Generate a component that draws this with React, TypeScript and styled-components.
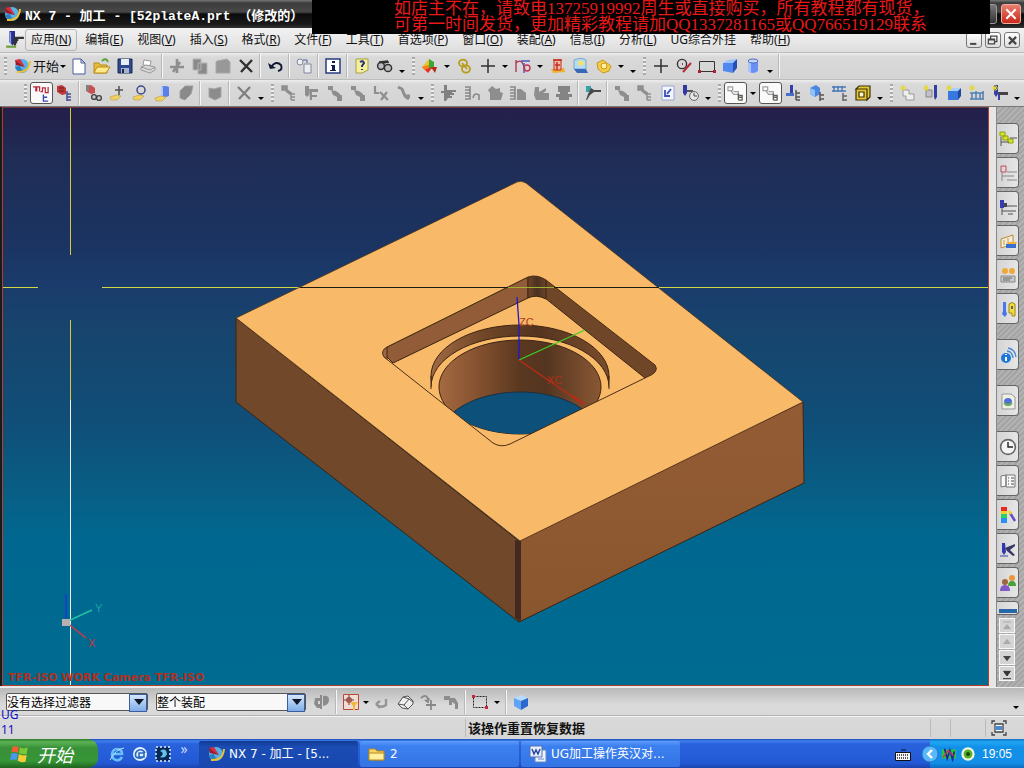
import React from "react";
import styled, { createGlobalStyle, css } from "styled-components";

const SANS = '"Noto Sans", "Noto Sans CJK SC", sans-serif';
const CJK = '"Noto Sans CJK SC", sans-serif';

const GlobalStyle = createGlobalStyle`
  * { box-sizing: border-box; }
  body { margin: 0; font-family: ${SANS}; font-size: 12px; color: #111; background: #d6d6d6; }
  button { font: inherit; color: inherit; padding: 0; border: 0; background: none; }
`;

const Window = styled.div`
  position: relative;
  display: flex;
  flex-direction: column;
  min-height: 100vh;
  overflow: hidden;
`;

/* ---------- title, banner, menus ---------- */

const TitleBar = styled.header`
  display: flex;
  align-items: center;
  height: 28px;
  padding: 0 3px;
  gap: 4px;
  background: linear-gradient(#777 0, #3c3c3c 3px, #484848 12px, #0c0c0c 14px, #1a1a1a 24px, #333 100%);
`;

const Title = styled.h1`
  flex: 1;
  margin: 0;
  color: #fff;
  font: bold 13px "Liberation Mono", ${CJK};
  white-space: pre;
`;

const WindowButton = styled.button<{ $close?: boolean }>`
  width: 20px;
  height: 20px;
  border: 1px solid ${(p) => (p.$close ? "#f0b0a0" : "#999")};
  border-radius: 3px;
  background: ${(p) => (p.$close ? "linear-gradient(#e88070, #c8281c)" : "linear-gradient(#777, #333)")};
  display: grid;
  place-items: center;
`;

const Banner = styled.aside`
  position: absolute;
  top: 0;
  left: 312px;
  right: 34px;
  height: 34px;
  padding: 1px 0 0 82px;
  overflow: hidden;
  background: #000;
  color: #e81818;
  font: 17px/16px "Liberation Serif", ${CJK};
  white-space: nowrap;
  p { margin: 0; }
`;

const MenuBar = styled.nav`
  display: flex;
  align-items: center;
  height: 24px;
  padding: 0 4px 0 5px;
  background: linear-gradient(#f2f2f2, #dedede);
`;

const Menus = styled.div`
  display: flex;
  gap: 2px;
`;

const MenuItem = styled.button<{ $active?: boolean }>`
  height: 22px;
  padding: 0 5px;
  border: 1px solid ${(p) => (p.$active ? "#b4b4b4" : "transparent")};
  border-radius: 3px;
  font: 12px/14px ${SANS};
  white-space: nowrap;
`;

const Spacer = styled.div`
  flex: 1;
`;

const MdiButtons = styled.div`
  display: flex;
  gap: 3px;
`;

const MdiButton = styled.button`
  width: 16px;
  height: 16px;
  border: 1px solid #777;
  border-radius: 3px;
  background: linear-gradient(#fff, #ddd);
  display: grid;
  place-items: center;
`;

/* ---------- toolbars ---------- */

const Toolbar = styled.div<{ $inset?: boolean }>`
  display: flex;
  align-items: center;
  height: 27px;
  padding-left: ${(p) => (p.$inset ? "20px" : "0")};
  border-top: 1px solid #bdbdbd;
  background: linear-gradient(#ececec 0, #d9d9d9 4px, #d4d4d4 100%);
`;

const Grip = styled.span`
  flex: none;
  width: 3px;
  height: 18px;
  margin: 0 3px 0 4px;
  background: repeating-linear-gradient(#aaa 0 2px, #eee 2px 4px);
`;

const Separator = styled.span`
  flex: none;
  width: 2px;
  height: 24px;
  margin: 0 2px;
  border-left: 1px solid #b8b8b8;
  border-right: 1px solid #f6f6f6;
`;

const Tool = styled.button<{ $active?: boolean }>`
  flex: none;
  width: 23px;
  height: 22px;
  display: grid;
  place-items: center;
  ${(p) =>
    p.$active &&
    css`
      border: 1px solid #555;
      border-radius: 3px;
      background: #fafafa;
    `}
`;

const StartTool = styled.button`
  font: 13px/18px ${CJK};
  white-space: nowrap;
`;

const DropButton = styled.button<{ $low?: boolean; $tight?: boolean }>`
  flex: none;
  width: ${(p) => (p.$tight ? "8px" : "12px")};
  height: 22px;
  display: grid;
  place-items: ${(p) => (p.$low ? "end center" : "center")};
  padding-bottom: ${(p) => (p.$low ? "4px" : "0")};
  &::after {
    content: "";
    border: 3px solid transparent;
    border-top-color: #000;
    border-bottom: 0;
  }
`;

/* ---------- work area ---------- */

const Work = styled.main`
  flex: 1;
  display: flex;
  min-height: 0;
  border-top: 1px solid #777;
  background: #e8e6e4;
`;

const Viewport = styled.section`
  flex: 1;
  min-width: 0;
  display: flex;
  margin: 0 0 1px 2px;
  border: 1px solid #b0402c;
  border-top-color: #6c3838;
  box-shadow: -2px 0 #1a1a1a;
  background: linear-gradient(
    #241f4a 0,
    #1f2d56 9%,
    #1b3462 24%,
    #1a3c6c 31%,
    #17446d 38%,
    #104e78 54%,
    #085f86 67%,
    #006890 75%,
    #006b91 100%
  );
  svg { flex: 1 1 0; width: 0; min-width: 0; display: block; }
`;

const Resource = styled.aside`
  flex: none;
  width: 28px;
  margin-left: 7px;
  padding-top: 16px;
  display: flex;
  flex-direction: column;
  align-items: flex-start;
  gap: 3px;
  border-left: 1px solid #888;
  background: repeating-linear-gradient(135deg, #a4a4a4 0 2px, #b2b2b2 2px 4px);
`;

const Tab = styled.button<{ $gap?: boolean; $cut?: boolean }>`
  width: 22px;
  height: ${(p) => (p.$cut ? "14px" : "31px")};
  margin-top: ${(p) => (p.$gap ? "12px" : "0")};
  border: 1px solid #666;
  border-left: 0;
  border-radius: 0 4px 4px 0;
  background: linear-gradient(90deg, #d4d4d4, #e6e6e6);
  display: grid;
  place-items: center;
  overflow: hidden;
`;

const Scrollers = styled.div`
  display: grid;
  gap: 1px;
  padding-left: 2px;
`;

const Scroller = styled.button`
  width: 16px;
  height: 15px;
  border: 1px solid #f8f8f8;
  background: #d4d4d4;
  display: grid;
  place-items: center;
`;

/* ---------- bottom bars ---------- */

const Footer = styled.footer`
  position: relative;
  background: linear-gradient(#b8b8b8, #dadada 18px, #d6d6d6);
`;

const SelectionBar = styled.div`
  display: flex;
  align-items: center;
  height: 29px;
  padding: 0 2px 0 6px;
  border-top: 1px solid #eee;
`;

const Picker = styled.label<{ $wide?: boolean }>`
  position: relative;
  display: flex;
  width: ${(p) => (p.$wide ? "150px" : "142px")};
  height: 18px;
  margin-right: ${(p) => (p.$wide ? "4px" : "8px")};
  &::before {
    content: "";
    position: absolute;
    right: 1px;
    top: 1px;
    width: 16px;
    height: 16px;
    border: 1px solid #3a5f9c;
    background: linear-gradient(#d4e6fb, #7fadea);
    pointer-events: none;
  }
  &::after {
    content: "";
    position: absolute;
    right: 4px;
    top: 6px;
    border: 5px solid transparent;
    border-top: 6px solid #101828;
    border-bottom: 0;
    pointer-events: none;
  }
  select {
    appearance: none;
    width: 100%;
    padding: 0;
    border: 1px solid #555;
    border-radius: 2px;
    background: #f8f8f8;
    color: #000;
    font: 12px/16px ${CJK};
  }
`;

const StatusBar = styled.div`
  display: grid;
  grid-template-columns: 466px 1fr 20px 35px 38px;
  height: 23px;
  border-top: 1px solid #f4f4f4;
  box-shadow: 0 -1px #b4b4b4;
`;

const Cell = styled.div`
  margin: 2px 0;
  padding-left: 2px;
  border-right: 1px solid #bbb;
  font: bold 13px/18px ${CJK};
  display: flex;
  align-items: center;
  &:last-child { border-right: 0; padding-left: 4px; }
`;

const Note = styled.div`
  position: absolute;
  left: 1px;
  top: 20px;
  color: #1010c8;
  font: 12px/15px ${SANS};
`;

const Taskbar = styled.nav`
  display: flex;
  align-items: stretch;
  height: 29px;
  background: linear-gradient(#1c4cb8 0, #3f80ee 2px, #2a62dc 5px, #2258d4 24px, #1a44ac 100%);
  color: #fff;
`;

const StartButton = styled.button`
  display: flex;
  align-items: center;
  gap: 7px;
  width: 98px;
  padding-left: 10px;
  border-radius: 0 10px 10px 0;
  background: linear-gradient(#2c7a2c 0, #5cb454 3px, #389038 9px, #369636 22px, #1e641e 100%);
  font: italic 18px/26px ${CJK};
`;

const QuickLaunch = styled.div`
  display: flex;
  align-items: center;
  width: 101px;
  padding-left: 7px;
`;

const More = styled.button`
  width: 20px;
  height: 20px;
  color: #c8dcff;
  font-size: 14px;
  line-height: 14px;
  align-self: start;
`;

const Task = styled.button<{ $active?: boolean }>`
  display: flex;
  align-items: center;
  gap: 4px;
  width: 159px;
  height: 26px;
  margin: 2px 2px 0 0;
  padding-left: 8px;
  border-radius: 2px;
  background: ${(p) =>
    p.$active ? "linear-gradient(#123a94, #1a4cb4 6px, #1848b0)" : "linear-gradient(#5c9cfc, #3c80f0 5px, #3474e4)"};
  font: 12px/16px "DejaVu Sans", ${CJK};
  white-space: pre;
`;

const InputMethod = styled.button`
  width: 34px;
  margin-right: 10px;
  display: grid;
  place-items: center;
`;

const Tray = styled.div`
  display: flex;
  align-items: center;
  width: 94px;
  background: linear-gradient(#1470c8 0, #20a8f4 3px, #1290e8 8px, #128ee6 24px, #0e6cc0 100%);
  time { padding-left: 5px; font: 12px/16px "Liberation Sans", sans-serif; white-space: nowrap; }
  button { width: 19px; display: grid; place-items: center; }
  button:first-child { margin-left: -10px; }
`;

/* ---------- icons ---------- */

const G = "#8e8e8e";
const tree = (c: string, d = c) => (
  <g stroke={d} strokeWidth="1.5" fill="none">
    <path d="M11 8v8M11 10h4M11 13h4M11 16h4" />
    <path d="M2 2h5v4H2z" fill={c} />
    <path d="M6 6l5 4" strokeWidth="3" stroke={c} />
  </g>
);
const cube = (
  <g>
    <path d="M2 6l5-3 9-1-4 4z" fill="#9cc4ff" />
    <path d="M2 6l10 0v10l-10-2z" fill="#5088f0" />
    <path d="M12 6l4-4v9l-4 5z" fill="#2450b8" />
  </g>
);
const drill = (c: string) => (
  <g fill={c}>
    <path d="M3 1h4v9l-2 3-2-3z" />
    <path d="M7 8h9v2H9v6H7z" />
  </g>
);
const spark = <path d="M4 1v6M1 4h6M2 2l4 4M6 2L2 6" stroke="#e8d820" strokeWidth="1" />;

const ART: Record<string, React.ReactNode> = {
  nx: (
    <g>
      <circle cx="9" cy="9" r="7" fill="#58b0e4" />
      <path d="M2 10q3 7 10 5-4-2-5-6z" fill="#2880c0" />
      <path d="M2 3l5-1 5 8z" fill="#e02838" />
      <path d="M2 3l1 5 9 2z" fill="#a01828" />
      <path d="M4 15Q16 16 17 4" stroke="#f0c030" strokeWidth="2" fill="none" />
    </g>
  ),
  app: (
    <g>
      <path d="M4 1h5v10l-2 3-3-3z" fill="#28308c" />
      <path d="M5 2v10" stroke="#88a0f0" />
      <path d="M8 6h9v2h-5v2h-1v2h-1v2H8z" fill="#333" />
      <path d="M1 15h9" stroke="#70a040" strokeWidth="2" />
    </g>
  ),
  file: <path d="M3 2h8l4 4v11H3zM11 2v4h4" fill="#fff" stroke="#4858a0" />,
  open: (
    <g stroke="#b88c18">
      <path d="M1 6h5l1 2h7v8H1z" fill="#e8bc38" />
      <path d="M4 10h13l-4 6H1z" fill="#ffe888" />
      <path d="M9 4q4-4 6 1" stroke="#58a030" strokeWidth="2" fill="none" />
    </g>
  ),
  save: (
    <g>
      <path d="M2 2h14v14H2z" fill="#304890" stroke="#182850" />
      <path d="M5 2h8v6H5z" fill="#e8eef8" />
      <path d="M5 11h8v5H5z" fill="#a8b4cc" />
      <path d="M6 12h2v4H6z" fill="#182850" />
    </g>
  ),
  print: (
    <g stroke="#999" fill="#d8d8d8">
      <path d="M5 3l7 1-1 5-7-1z" fill="#fff" />
      <path d="M2 10l5-2 9 2v3l-5 3-9-3z" />
      <path d="M2 10l9 3 5-3" fill="none" />
    </g>
  ),
  cut: <path d="M9 2v14M2 10h14M5 15L12 5" stroke={G} strokeWidth="2.6" />,
  copy: <path d="M2 2h8v11H2zM7 6h9v11H7z" fill="#8a8a8a" stroke="#b4b4b4" />,
  paste: <path d="M3 4l10-2 3 3v11H2V5z" fill="#989898" stroke="#a8a8a8" />,
  del: <path d="M3 3l12 12M15 3L4 15" stroke="#303030" strokeWidth="2.4" />,
  delGray: <path d="M3 3l12 12M15 3L4 15" stroke="#808080" strokeWidth="2.4" />,
  undo: (
    <g fill="none" stroke="#101838" strokeWidth="2">
      <path d="M5 10q5-7 10-2 2 5-3 6" />
      <path d="M2 6l2 6 6-1z" fill="#101838" stroke="none" />
    </g>
  ),
  touch: (
    <g stroke="#8088a0" fill="#eee">
      <circle cx="5" cy="5" r="3" />
      <path d="M9 7h7v9H9z" />
      <path d="M8 3h4v3" fill="none" stroke="#4860a8" />
    </g>
  ),
  info: (
    <g>
      <path d="M2 2h14v14H2z" fill="#fff" stroke="#283c80" strokeWidth="1.5" />
      <path d="M8 4h3v2H8zM7 8h4v5h1v1H6v-1h2V9H7z" fill="#101c50" />
    </g>
  ),
  help: (
    <g>
      <path d="M3 2h12v11l-6 3H3z" fill="#f4f09c" stroke="#a8a040" />
      <path d="M7 5q3-2 4 1l-2 3v1M9 12v1" fill="none" stroke="#283080" strokeWidth="2" />
    </g>
  ),
  find: (
    <g fill="#bbb" stroke="#303030" strokeWidth="1.5">
      <path d="M3 5l9-1M7 6l6-1" />
      <circle cx="5" cy="9" r="3.4" />
      <circle cx="12" cy="11" r="3.6" />
    </g>
  ),
  wcs: (
    <g>
      <path d="M1 10L8 2v9z" fill="#f0c020" />
      <path d="M8 2l5 3v7H8z" fill="#38a838" />
      <path d="M1 10l6 6 4-5z" fill="#e83020" />
      <path d="M1 10l3 3 4-2V8z" fill="#f08020" />
      <path d="M10 10h6l-2 6z" fill="#b82818" />
    </g>
  ),
  link: (
    <g fill="none" stroke="#b89c18" strokeWidth="1.8">
      <ellipse cx="7" cy="6" rx="4" ry="3.4" />
      <ellipse cx="10" cy="12" rx="4" ry="3.6" />
      <path d="M6 6l5 6" />
    </g>
  ),
  plus: <path d="M9 2v14M2 9h14" stroke="#303030" strokeWidth="1.5" />,
  curve: (
    <g fill="none" strokeWidth="1.4">
      <path d="M2 3v12M2 6q6-6 9 7" stroke="#b03858" />
      <path d="M7 4l9 0M10 6v10" stroke="#4858c0" />
      <circle cx="13" cy="11" r="3" stroke="#c03850" />
    </g>
  ),
  cylRed: (
    <g>
      <path d="M2 12l13-1 1 4-12 1z" fill="#f0b030" />
      <path d="M5 3h7v10H5z" fill="#f8b8a8" stroke="#c03020" />
      <path d="M4 3h9M6 8h5M8 5v8" stroke="#c03020" strokeWidth="1.5" />
    </g>
  ),
  sheet: (
    <g>
      <path d="M2 3q8-3 12 0v9H2z" fill="#b0dcf8" stroke="#78a8c8" />
      <path d="M2 12h12l2 4H5z" fill="#3868b8" />
      <path d="M6 4q5-2 7 3-4 3-7 1z" fill="#f4e078" />
    </g>
  ),
  gold: (
    <g fill="#f4cc48" stroke="#c89820">
      <path d="M2 6l6-3 4 3 4 3-2 5-6 2-5-4z" />
      <circle cx="9" cy="9" r="3" fill="#fff0a0" />
    </g>
  ),
  arc: (
    <g fill="none">
      <circle cx="7" cy="7" r="4.6" stroke="#333" strokeWidth="1.4" />
      <path d="M7 7h1M8 15l8-9" stroke="#b82838" strokeWidth="2" />
    </g>
  ),
  rect: (
    <g>
      <path d="M1.5 4.5h15v10h-15z" fill="none" stroke="#333" />
      <path d="M0 13h3v3H0zM15 13h3v3h-3z" fill="#b02030" />
    </g>
  ),
  block: cube,
  cyl: (
    <g>
      <path d="M4 4v10q5 4 10 0V4z" fill="#6890f4" />
      <path d="M4 4v10l3 2V4z" fill="#a8c4ff" />
      <ellipse cx="9" cy="4" rx="5" ry="2" fill="#c4d8ff" stroke="#5068b8" />
    </g>
  ),
  program: (
    <g fill="none">
      <path d="M0 2h3v5M4 7V2h3v5M8 7h2V3h3v5h3V2" stroke="#b82838" strokeWidth="1.3" />
      <path d="M11 10v7h5M11 13h4" stroke="#3848b0" strokeWidth="1.4" />
    </g>
  ),
  method: (
    <g>
      <path d="M1 2l5-1 4 3v6l-4 1-5-3z" fill="#c03838" />
      <path d="M3 4h5M3 7h5" stroke="#602020" />
      <path d="M11 7v10M11 10h4M11 13h4M11 16h4" stroke="#444c90" strokeWidth="1.5" />
    </g>
  ),
  findOp: (
    <g>
      <path d="M1 2l5-1 4 3v5l-4 1-5-3z" fill="#c85050" />
      <path d="M1 1h3v6H1z" fill="#808080" />
      <circle cx="9" cy="13" r="2.4" fill="#ccc" stroke="#444" strokeWidth="1.4" />
      <circle cx="14" cy="14" r="2.4" fill="#ccc" stroke="#444" strokeWidth="1.4" />
    </g>
  ),
  handPlus: (
    <g>
      <path d="M11 2v9M7 6h8" stroke="#505050" strokeWidth="1.5" />
      <path d="M2 13l6-2 5 1-4 4H3z" fill="#f0d060" stroke="#b89c40" strokeWidth=".6" />
    </g>
  ),
  handArc: (
    <g>
      <circle cx="10" cy="6" r="4" fill="none" stroke="#3c4888" strokeWidth="1.5" />
      <path d="M2 13l6-2 5 1-4 4H3z" fill="#f0d060" stroke="#b89c40" strokeWidth=".6" />
    </g>
  ),
  handCyl: (
    <g>
      <path d="M7 3q4-2 8 0v9q-4 2-8 0z" fill="#5880e8" />
      <path d="M7 3v9h2V3z" fill="#b0c8ff" />
      <path d="M1 14l6-2 5 1-4 4H2z" fill="#f0d060" stroke="#b89c40" strokeWidth=".6" />
    </g>
  ),
  stack: <path d="M3 7l5-5h8l-2 8-6 6-5-2z" fill="#8a8a8a" stroke="#a0a0a0" />,
  shield: <path d="M3 4l5 1 7-2v10l-6 3-6-3z" fill="#8c8c8c" stroke="#a4a4a4" />,
  gTree: tree("#8e8e8e"),
  gMill: (
    <g fill={G}>
      <path d="M2 2h4v9l-2 2-2-2z" />
      <path d="M6 5h9v3H9v3h5v2H9v3H7z" />
    </g>
  ),
  gBlk: (
    <g fill={G}>
      <path d="M2 2h5v4H2z" />
      <path d="M5 6l5 1 4 3v1h2v6h-5v-4l-4-2z" />
    </g>
  ),
  gCut: (
    <g stroke={G} strokeWidth="2.2" fill="none">
      <path d="M3 2v7h4M8 8l8 8M15 8l-6 8" />
    </g>
  ),
  gLine: <path d="M3 3l4 2 3 7 4 3M9 12h6" stroke={G} strokeWidth="3" fill="none" />,
  gHand: <path d="M4 1h3v5h9v2h-4v1h2v2H10v1h2v2H8l-2 3H4V9H1V7h3z" fill="#808080" />,
  gCoil: <path d="M2 3h5v3H2M7 6v3H2M7 9v3H2M7 12v3H2M10 14q1-6 6-3v5" stroke="#888" strokeWidth="1.6" fill="none" />,
  gFold: <path d="M2 6l4-4 4 3 4-1v4l3 1-2 7H4V9z" fill={G} />,
  gSaw: (
    <g>
      <path d="M1 3h5v3H1M6 6v3H1M6 9v3H1M6 12v3H1" stroke="#888" strokeWidth="1.6" />
      <path d="M8 5h4l5 4v7H8z" fill={G} />
    </g>
  ),
  gPost: <path d="M3 3h4v5l7-4v3l-3 2h6v7H4l-2-5z" fill={G} />,
  gMach: <path d="M3 2h12v6h-2v2h4v3h-3v3H4v-3H1v-3h4V8H3z" fill="#848484" />,
  tool: (
    <g>
      <path d="M2 2h5v6H2z" fill="#38a0a8" />
      <path d="M7 4l3 2h7v2h-7l-4 3-3 5H2l2-6z" fill="#484848" />
    </g>
  ),
  docBlue: (
    <g>
      <path d="M3 2h12v14H3z" fill="#f4f6ff" stroke="#98a4d0" />
      <path d="M6 6v6h5M8 10l4-5" fill="none" stroke="#3850b8" strokeWidth="1.8" />
    </g>
  ),
  clockTool: (
    <g>
      <path d="M1 1h4v8l-2 3-2-3z" fill="#3038a8" />
      <path d="M5 6h6v2H5z" fill="#555" />
      <circle cx="12" cy="12" r="4.4" fill="#e8e8e8" stroke="#666" />
      <path d="M12 9v3h3" stroke="#444" fill="none" />
    </g>
  ),
  order: (
    <g fill="none" stroke="#a0a0a0" strokeWidth="1.3">
      <path d="M1 2h5v4H1zM4 6l3 4h5V7H7" />
      <path d="M12 9v7M12 11h4v5h-4M12 13h4" stroke="#5c6458" strokeWidth="1.4" />
    </g>
  ),
  blueTool: (
    <g>
      <path d="M5 1h3v8l-2 2-1-2z" fill="#3040b0" />
      <path d="M1 9h8v3H1z" fill="#4870c8" />
      <path d="M11 6v10M11 9h4M11 13h4M11 16h4" stroke="#555" strokeWidth="1.5" />
    </g>
  ),
  blueBox: (
    <g>
      <path d="M2 4l6-3 4 3v6l-5 3-5-3z" fill="#4888e0" />
      <path d="M2 4l5 2v7l-5-3z" fill="#90c0f8" />
      <path d="M12 8v9M12 11h4M12 15h4" stroke="#555" strokeWidth="1.5" />
    </g>
  ),
  blueRail: (
    <g>
      <path d="M1 3h14M1 7h14M3 2v6M7 2v6M11 2v6" stroke="#4878b8" strokeWidth="1.4" />
      <path d="M12 9v8M12 12h4M12 16h4" stroke="#666" strokeWidth="1.5" />
    </g>
  ),
  yellowBox: (
    <g stroke="#383010" strokeWidth="1.2">
      <path d="M2 5h11v11H2zM2 5l3-3h11v11l-3 3V5z" fill="#e8c830" />
      <path d="M5 8h5v5H5z" fill="#fff8c0" />
    </g>
  ),
  newOp: (
    <g>
      <path d="M4 6h6v4h5v6H7v-4H4z" fill="#eee" stroke="#999" />
      {spark}
    </g>
  ),
  newTool: (
    <g>
      <path d="M4 6h6v7H4z" fill="#c0c0c8" stroke="#888" />
      <path d="M12 1h3v12l-2 3-1-3z" fill="#3040a0" />
      {spark}
    </g>
  ),
  newBox: (
    <g>
      <path d="M3 7l4-3h9l-3 3z" fill="#a8d0ff" />
      <path d="M3 7h10v9H3z" fill="#3878e0" />
      <path d="M13 7l3-3v8l-3 4z" fill="#1c48a0" />
      {spark}
    </g>
  ),
  newRail: (
    <g>
      <path d="M2 9h14M2 15h14M4 9v6M8 7v8M12 9v6M15 7v8" stroke="#5080b0" strokeWidth="1.5" />
      {spark}
    </g>
  ),
  newPliers: (
    <g>
      {drill("#3840a0")}
      <path d="M8 8h9v3H8z" fill="#444" />
      {spark}
    </g>
  ),
  /* resource tabs */
  navAsm: (
    <g>
      <path d="M1 2h5v4H1zM4 6h5v4H4zM9 9h5v4H9z" fill="#d8e428" stroke="#90a010" />
      <path d="M2 7v9M2 12h8M11 8h7" stroke="#555" />
    </g>
  ),
  navPart: (
    <g fill="none" stroke="#888">
      <path d="M2 2h5v6H2z" stroke="#c04858" />
      <path d="M3 8v9M3 12h12M8 8h10M8 16h10" />
    </g>
  ),
  navOp: (
    <g>
      <path d="M1 2h4v8H1z" fill="#383cb0" />
      <path d="M5 5h3v4H5z" fill="#445" />
      <path d="M8 8h10M3 10v7M3 13h14M9 16h5" stroke="#555" />
    </g>
  ),
  navTmpl: (
    <g>
      <path d="M2 7l12-4v9L2 16z" fill="#f0ece0" stroke="#c08830" />
      <path d="M5 8v5M9 6v5" stroke="#d89838" />
      <path d="M7 12h10v4H7z" fill="#3870d0" />
      <path d="M7 12l3-2h8l-1 2z" fill="#f0b030" />
    </g>
  ),
  navPeople: (
    <g>
      <circle cx="6" cy="5" r="3" fill="#f0a838" />
      <circle cx="13" cy="5" r="3" fill="#f0a838" />
      <path d="M2 10h14v6H2z" fill="#c8c8c8" stroke="#888" />
      <path d="M4 12h9M4 14h7" stroke="#666" />
    </g>
  ),
  navTherm: (
    <g>
      <path d="M4 2h3v9l1 3-2 3-3-3 1-3z" fill="#4878e8" />
      <path d="M10 4q3-3 6 0v12h-3v-3h-3z" fill="#f0dc40" stroke="#a08818" />
      <path d="M12 6h2v3h-2z" fill="#666" />
    </g>
  ),
  navInfo: (
    <g>
      <circle cx="7" cy="12" r="5" fill="#1c78d8" />
      <path d="M6 8h2v1H6zM6 11h2v4H6z" fill="#fff" />
      <path d="M8 5q5 0 6 7M9 2q7 1 8 9" stroke="#4888d8" fill="none" strokeWidth="1.3" />
    </g>
  ),
  navWeb: (
    <g>
      <path d="M3 2h9l4 3v12H3z" fill="#eef0e4" stroke="#999" />
      <circle cx="9" cy="10" r="4" fill="#5070d8" />
      <path d="M5 11q4 4 8 0" stroke="#70b050" strokeWidth="2" fill="none" />
    </g>
  ),
  clock: (
    <g>
      <circle cx="9" cy="9" r="7.4" fill="#f4f4f4" stroke="#666" strokeWidth="1.6" />
      <path d="M9 4v5h5" stroke="#222" fill="none" strokeWidth="1.4" />
    </g>
  ),
  navDoc: (
    <g fill="#f8f8f8" stroke="#777">
      <path d="M2 4l5-1v11l-5 1zM7 3h9v12H7z" />
      <path d="M9 6h1M12 6h3M9 9h1M12 9h3M9 12h1M12 12h3" stroke="#444" />
    </g>
  ),
  navColor: (
    <g>
      <path d="M2 1h6v4H2z" fill="#e82820" />
      <path d="M2 5h6v3H2z" fill="#f0d020" />
      <path d="M2 8h6v4H2z" fill="#30d060" />
      <path d="M2 12h6v5H2z" fill="#2890f0" />
      <path d="M11 7l5 8" stroke="#6848c8" strokeWidth="2.5" />
      <path d="M10 5l2 3" stroke="#f0d020" strokeWidth="2.5" />
    </g>
  ),
  navMill: (
    <g>
      <path d="M3 3l3 0 1 9-2 3-2-3z" fill="#3038b0" />
      <path d="M6 8l10-4v2l-5 4 5 5-2 1-6-5z" fill="#383868" />
      <path d="M1 16h8" stroke="#8890c0" strokeWidth="2" />
    </g>
  ),
  navRoles: (
    <g>
      <circle cx="13" cy="4" r="3" fill="#e89838" />
      <path d="M9 12q0-5 4-5t4 5z" fill="#48a038" />
      <circle cx="6" cy="8" r="3" fill="#a06838" />
      <path d="M1 17q0-6 5-6t5 6z" fill="#8058c8" />
    </g>
  ),
  navLast: <path d="M0 7h18v4H0z" fill="#2868a8" />,
  /* selection bar */
  gChain: (
    <g>
      <path d="M2 5h6v3H5v3h3v4H4l-3-4zM10 3q6-1 6 4t-6 6z" fill="#8c8c8c" />
      <path d="M8 2v14" stroke="#8c8c8c" strokeWidth="2" />
    </g>
  ),
  snap: (
    <g>
      <path d="M1.5 1.5h15v15h-15z" fill="#f0dcd4" stroke="#b84838" />
      <path d="M7 2v10M2 7h10" stroke="#803028" />
      <path d="M5 5h4v4H5z" fill="none" stroke="#803028" />
      <path d="M8 9h8l-3 4v4h-2v-4z" fill="#f0b838" />
    </g>
  ),
  gBack: <path d="M3 11q5 5 10 1V6M3 11l4-3M3 11l4 4" fill="none" stroke="#959595" strokeWidth="2.4" />,
  eraser: <path d="M2 11l5-7 5-1 5 5v3l-5 5-6-1zM2 11l6 1 4 4M8 12l5-6 4 3M7 4l6 2" fill="#eee" stroke="#555" />,
  gUndo: <path d="M2 5q6-5 7 2M10 5l-1 4-3-2M12 7v10M7 12h10" fill="none" stroke="#888" strokeWidth="1.8" />,
  gSteps: <path d="M2 3h6v2h5l3 5v6h-3v-5l-3-2v3H7V7H2z" fill="#8c8c8c" />,
  marquee: (
    <g>
      <path d="M2.5 3.5h13v11h-13z" fill="none" stroke="#222" strokeDasharray="2 1" />
      <path d="M1 2h3v3H1zM14 13h3v3h-3z" fill="#c82838" />
    </g>
  ),
  blueCube: (
    <g>
      <path d="M2 5l7-3 7 3-7 3z" fill="#b8dcff" />
      <path d="M2 5l7 3v9l-7-4z" fill="#60a4f4" />
      <path d="M9 8l7-3v8l-7 4z" fill="#2c68d0" />
    </g>
  ),
  full: (
    <g fill="none" stroke="#444" strokeWidth="1.3">
      <path d="M2 5V2h3M13 2h3v3M16 13v3h-3M5 16H2v-3" />
      <path d="M5 5h8v8H5z" fill="#fff" />
      <path d="M6 7h6v4H6z" fill="#4888d8" stroke="none" />
    </g>
  ),
  /* taskbar */
  flag: (
    <g>
      <path d="M2 3q3-2 6 0L7 8Q4 6 1 8z" fill="#f06030" />
      <path d="M9 3q3 2 7 0l-1 6q-3 1-7-1z" fill="#78c838" />
      <path d="M1 9q3-2 6 0l-1 6q-3-2-6 0z" fill="#4898f0" />
      <path d="M8 9q3 2 7 1l-1 6q-4 1-7-1z" fill="#f8cc38" />
    </g>
  ),
  ie: (
    <g fill="none">
      <path d="M14 12q-2 4-6 3-4-1-4-6 1-5 5-5 5 0 5 5H4" stroke="#68c0f8" strokeWidth="2.6" />
      <path d="M2 15Q8 4 16 3" stroke="#b0e0ff" />
    </g>
  ),
  mail: (
    <g>
      <circle cx="9" cy="9" r="7" fill="#e4f0fc" />
      <path d="M14 8q-2-4-6-3-5 2-3 7 5 3 8-1M8 8h5v4H8z" fill="none" stroke="#2868c0" strokeWidth="1.6" />
    </g>
  ),
  desk: (
    <g>
      <path d="M2 2h14v14H2z" fill="#082858" stroke="#e0f0ff" strokeWidth="1.5" strokeDasharray="2 2" />
      <path d="M6 6q6-4 7 3-2 5-7 3 4-2 2-5z" fill="#68c0e8" />
    </g>
  ),
  folder: (
    <g stroke="#b88818">
      <path d="M1 4h6l2 2h7v9H1z" fill="#f8d860" />
      <path d="M1 8h15v7H1z" fill="#fff0a0" />
    </g>
  ),
  word: (
    <g>
      <path d="M6 5h11v12H6z" fill="#f0f4ff" stroke="#6888c0" />
      <path d="M1 1h12v11H1z" fill="#e8eefc" stroke="#5070b0" />
      <path d="M3 4l2 5 2-4 2 4 2-5" fill="none" stroke="#2848a0" strokeWidth="1.5" />
      <path d="M9 14h6" stroke="#6888c0" />
    </g>
  ),
  keyboard: (
    <g>
      <path d="M1.5 7.5h15v8h-15z" fill="#f4f4f4" stroke="#111" />
      <path d="M3 10h12M3 13h12" stroke="#222" strokeDasharray="1 1" strokeWidth="1.5" />
      <path d="M7 5h5" stroke="#111" />
    </g>
  ),
  chevron: (
    <g>
      <circle cx="9" cy="9" r="8" fill="#58b8f8" stroke="#2878d0" />
      <path d="M11 5L7 9l4 4" fill="none" stroke="#fff" strokeWidth="2.4" />
    </g>
  ),
  net: (
    <g>
      <path d="M1 4h16v10H1z" fill="#28c838" />
      <path d="M4 3l3 11 3-9 3 10 2-9" fill="none" stroke="#2028a0" strokeWidth="2" />
      <path d="M2 13l6-8 6 6" stroke="#d03060" fill="none" strokeWidth="1.5" />
    </g>
  ),
  eye: (
    <g>
      <circle cx="9" cy="9" r="7.5" fill="#f0f8e0" />
      <circle cx="9" cy="9" r="5" fill="#58b028" />
      <circle cx="9" cy="9" r="2.2" fill="#184810" />
    </g>
  ),
  /* window glyphs */
  winMin: <path d="M4 14h8" stroke="#444" strokeWidth="2.5" />,
  winRestore: <path d="M6 8V4h8v7h-3M3 8h8v6H3zM3 9h8" fill="none" stroke="#444" strokeWidth="1.6" />,
  winClose: <path d="M4 4l10 10M14 4L4 14" stroke="#444" strokeWidth="3" />,
  closeWhite: <path d="M3 3l12 12M15 3L3 15" stroke="#fff" strokeWidth="2.6" />,
  top: <path d="M3 3h12M9 7l5 6H4z" fill="#aaa" stroke="#aaa" strokeWidth="1.5" />,
  up: <path d="M9 4l6 8H3z" fill="#aaa" />,
  down: <path d="M9 14l6-8H3z" fill="#444" />,
  bottom: <path d="M3 16h12M9 12l5-7H4z" fill="#333" stroke="#333" strokeWidth="1.5" />,
};

const Icon = ({ name, size = 18 }: { name: string; size?: number }) => (
  <svg width={size} height={size} viewBox="0 0 18 18" fill="none" aria-hidden="true">
    {ART[name]}
  </svg>
);

/* "|" separator, ":" grip, "v" arrow, "_" low arrow, "*" prefix marks a pressed tool, "<" narrow arrow */
const Tools = ({ items }: { items: string }) => (
  <>
    {items.split(" ").map((it, i) => {
      if (it === "|") return <Separator key={i} />;
      if (it === ":") return <Grip key={i} />;
      if (it === "v") return <DropButton key={i} aria-label="更多" />;
      if (it === "<") return <DropButton key={i} $tight aria-label="更多" />;
      if (it === "_") return <DropButton key={i} $low aria-label="选项" />;
      const active = it[0] === "*";
      const name = active ? it.slice(1) : it;
      return (
        <Tool key={i} $active={active} aria-label={name}>
          <Icon name={name} size={active ? 17 : 18} />
        </Tool>
      );
    })}
  </>
);

const MENUS: [string, string][] = [
  ["应用", "N"], ["编辑", "E"], ["视图", "V"], ["插入", "S"], ["格式", "R"], ["文件", "F"], ["工具", "T"],
  ["首选项", "P"], ["窗口", "O"], ["装配", "A"], ["信息", "I"], ["分析", "L"], ["UG综合外挂", ""], ["帮助", "H"],
];

const TABS: { name: string; gap?: boolean; cut?: boolean }[] = [
  { name: "navAsm" }, { name: "navPart" }, { name: "navOp" }, { name: "navTmpl" }, { name: "navPeople" },
  { name: "navTherm" }, { name: "navInfo", gap: true }, { name: "navWeb", gap: true }, { name: "clock", gap: true },
  { name: "navDoc" }, { name: "navColor" }, { name: "navMill" }, { name: "navRoles" }, { name: "navLast", cut: true },
];

const POCKET =
  "M387 347L528 277Q537 274 546 280L655 365Q660 372 647 377L510 444Q501 448 493 443L384 357Q380 351 387 347Z";

const Model = () => (
  <svg viewBox="3 108 985 577" preserveAspectRatio="xMidYMid slice" role="img" aria-label="52plateA">
    <defs>
      <linearGradient id="bore">
        <stop offset="0" stopColor="#a56a40" />
        <stop offset=".25" stopColor="#83502f" />
        <stop offset=".5" stopColor="#5a3820" />
        <stop offset=".66" stopColor="#543520" />
        <stop offset="1" stopColor="#8a5834" />
      </linearGradient>
      <linearGradient id="rim">
        <stop offset="0" stopColor="#a06a42" />
        <stop offset=".3" stopColor="#704628" />
        <stop offset=".6" stopColor="#543420" />
        <stop offset="1" stopColor="#7a4c2c" />
      </linearGradient>
      <linearGradient id="corner">
        <stop offset="0" stopColor="#704628" />
        <stop offset=".5" stopColor="#4c3020" />
        <stop offset="1" stopColor="#6a4428" />
      </linearGradient>
      <linearGradient id="rightFace" x1="0" x2="0" y1="0" y2="1">
        <stop offset="0" stopColor="#945c34" />
        <stop offset="1" stopColor="#8a562e" />
      </linearGradient>
      <clipPath id="pocket"><path d={POCKET} /></clipPath>
      <clipPath id="outer"><ellipse cx="520" cy="376" rx="89" ry="51" /><path d="M431 376h178v70H431z" /></clipPath>
      <clipPath id="inner"><ellipse cx="520" cy="387" rx="81" ry="47" /></clipPath>
    </defs>

    <path d="M70.500 108V255M70.500 320V400" stroke="#d8c840" />
    <path d="M70.500 400V686" stroke="#f0f0e0" />
    <path d="M3 287.500H38M102 287.500H988" stroke="#d4d840" />

    <g strokeLinejoin="round">
      <path d="M236 318L519 541V622L236 402Z" fill="#714829" stroke="#3c2412" />
      <path d="M519 541L803 402L804 483L519 622Z" fill="url(#rightFace)" stroke="#3c2412" />
      <path d="M515 540L521 541V621L515 618Z" fill="#432a20" />
      <path d="M236 318L517 182Q521 180 526 183L803 402L520 541Z" fill="#f8ba69" stroke="#4a3018" strokeWidth=".8" />
    </g>

    <g clipPath="url(#pocket)">
      <path d="M380 350L387 347L528 277V298L393 363Z" fill="#925c38" stroke="#3c2412" />
      <path d="M378 340H387V360L378 356Z" fill="#a06840" stroke="#3c2412" />
      <path d="M546 278L665 366L650 382L545 298Z" fill="#704628" stroke="#3c2412" />
      <path d="M528 270H546V299Q536 294 528 298Z" fill="url(#corner)" stroke="#3c2412" />
      <ellipse cx="520" cy="376" rx="89" ry="51" fill="url(#rim)" stroke="#3c2412" />
      <g clipPath="url(#outer)">
        <ellipse cx="520" cy="387" rx="89" ry="51" fill="#f8ba69" />
        <path d="M431 387a89 51 0 0 1 178 0" fill="none" stroke="#3c2412" />
      </g>
      <path d="M431 376v13M609 376v13" stroke="#3c2412" />
      <ellipse cx="520" cy="387" rx="81" ry="47" fill="url(#bore)" stroke="#3c2412" />
      <g clipPath="url(#inner)">
        <ellipse cx="520" cy="439" rx="81" ry="47" fill="#0d5079" stroke="#203040" />
      </g>
    </g>
    <path d={POCKET} fill="none" stroke="#4a2e16" />

    <path d="M300 287.500H659" stroke="#1c1c10" />
    <path d="M508 287.500H554" stroke="#a0b030" />

    <g strokeWidth="1.300" fill="none">
      <path d="M517 297L519 325V360" stroke="#2018d0" />
      <path d="M519 360L585 330" stroke="#40d020" />
      <path d="M519 360L583 404" stroke="#c02818" />
      <path d="M572 396L584 404" stroke="#c02818" strokeWidth="3" opacity=".6" />
      <path d="M66 622V594" stroke="#2030e0" />
      <path d="M66 622L92 610" stroke="#20c0a0" strokeWidth="1.600" />
      <path d="M66 622L86 638" stroke="#d03848" strokeWidth="1.600" />
    </g>
    <path d="M62 619h8v7h-8z" fill="#b8b0b0" />
    <g fontFamily="Liberation Sans, sans-serif" fontSize="11">
      <text x="519" y="326" fill="#a84020">ZC</text>
      <text x="547" y="384" fill="#b03018">XC</text>
      <text x="95" y="612" fill="#20a0a8">Y</text>
      <text x="88" y="647" fill="#d03040">X</text>
      <text x="8" y="681" fill="#b03020" fontFamily="DejaVu Sans, sans-serif" fontWeight="bold">
        TFR-ISO WORK Camera TFR-ISO
      </text>
    </g>
  </svg>
);

export default function App() {
  return (
    <Window>
      <GlobalStyle />
      <TitleBar>
        <Icon name="nx" />
        <Title>NX 7 - 加工 - [52plateA.prt （修改的）</Title>
        <WindowButton aria-label="还原"><Icon name="winRestore" size={12} /></WindowButton>
        <WindowButton $close aria-label="关闭"><Icon name="closeWhite" size={14} /></WindowButton>
      </TitleBar>
      <Banner>
        <p>如店主不在，请致电13725919992周生或直接购买，所有教程都有现货，</p>
        <p>可第一时间发货，更加精彩教程请加QQ1337281165或QQ766519129联系</p>
      </Banner>

      <MenuBar>
        <Icon name="app" size={20} />
        <Menus>
          {MENUS.map(([label, key], i) => (
            <MenuItem key={label} $active={i === 0}>
              {label}{key && <>(<u>{key}</u>)</>}
            </MenuItem>
          ))}
        </Menus>
        <Spacer />
        <MdiButtons>
          <MdiButton aria-label="最小化"><Icon name="winMin" size={14} /></MdiButton>
          <MdiButton aria-label="还原"><Icon name="winRestore" size={14} /></MdiButton>
          <MdiButton aria-label="关闭"><Icon name="winClose" size={13} /></MdiButton>
        </MdiButtons>
      </MenuBar>

      <Toolbar>
        <Tools items=": nx" />
        <StartTool>开始</StartTool>
        <Tools items="< file open save print | cut copy paste del | undo | touch | info | help find _ : wcs v link plus v curve v cylRed sheet gold v _ : plus arc rect block cyl _ |" />
      </Toolbar>
      <Toolbar $inset>
        <Tools items=": *program method | findOp handPlus handArc handCyl stack | shield | delGray _ : gTree gMill gBlk gBlk gCut gLine _ : gHand gCoil gFold gSaw gPost gMach | tool | gBlk gTree docBlue clockTool _ : *order v *order blueTool blueBox blueRail yellowBox _ : newOp newTool newBox newRail newPliers _" />
      </Toolbar>

      <Work>
        <Viewport><Model /></Viewport>
        <Resource>
          {TABS.map((t) => (
            <Tab key={t.name} $gap={t.gap} $cut={t.cut} aria-label={t.name}><Icon name={t.name} /></Tab>
          ))}
          <Scrollers>
            {["top", "up", "down", "bottom"].map((n) => (
              <Scroller key={n} aria-label={n}><Icon name={n} size={12} /></Scroller>
            ))}
          </Scrollers>
        </Resource>
      </Work>

      <Footer>
        <SelectionBar>
          <Picker><select aria-label="类型过滤器"><option>没有选择过滤器</option></select></Picker>
          <Picker $wide><select aria-label="选择范围"><option>整个装配</option></select></Picker>
          <Tools items="gChain | snap < gBack eraser gUndo gSteps | marquee v | blueCube" />
          <Spacer />
          <DropButton $low aria-label="选项" />
        </SelectionBar>
        <StatusBar>
          <Cell />
          <Cell>该操作重置恢复数据</Cell>
          <Cell />
          <Cell />
          <Cell><Icon name="full" /></Cell>
        </StatusBar>
        <Note>UG<br />11</Note>
      </Footer>

      <Taskbar>
        <StartButton><Icon name="flag" size={20} />开始</StartButton>
        <QuickLaunch>
          <Tools items="ie mail desk" />
          <More aria-label="更多">»</More>
        </QuickLaunch>
        <Task $active><Icon name="nx" />NX 7 - 加工 - [5...</Task>
        <Task><Icon name="folder" />2</Task>
        <Task><Icon name="word" />UG加工操作英汉对...</Task>
        <Spacer />
        <InputMethod aria-label="输入法"><Icon name="keyboard" /></InputMethod>
        <Tray>
          <button aria-label="显示隐藏的图标"><Icon name="chevron" /></button>
          <button aria-label="网络"><Icon name="net" size={16} /></button>
          <button aria-label="安全"><Icon name="eye" size={16} /></button>
          <time>19:05</time>
        </Tray>
      </Taskbar>
    </Window>
  );
}
